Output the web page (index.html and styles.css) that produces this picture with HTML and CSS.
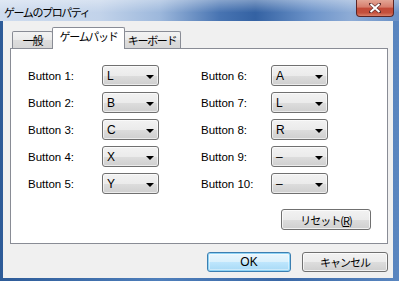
FILE: index.html
```html
<!DOCTYPE html>
<html lang="ja">
<head>
  <meta charset="UTF-8" />
  <title>ゲームのプロパティ</title>
  <link rel="stylesheet" href="styles.css">
</head>
<body>
  <div class="window">
    <!-- Barre de titre -->
    <div class="titlebar">
      <span class="title">ゲームのプロパティ</span>
      <div class="close">
        <svg width="12" height="10" viewBox="0 0 12 10">
          <path d="M1.5 1 L10.5 9 M10.5 1 L1.5 9" stroke="#5a2a2a" stroke-width="3.2" stroke-linecap="square"/>
          <path d="M1.5 1 L10.5 9 M10.5 1 L1.5 9" stroke="#ffffff" stroke-width="2"/>
        </svg>
      </div>
    </div>

    <div class="client">
      <div class="tabs">
        <div class="tab general">一般</div>
        <div class="tab active">ゲームパッド</div>
        <div class="tab keyboard">キーボード</div>
      </div>

      <div class="panel">
        <div class="grid">
          <span class="lbl">Button 1:</span><div class="combo"><span>L</span><i class="arrow"></i></div><span></span>
          <span class="lbl">Button 6:</span><div class="combo"><span>A</span><i class="arrow"></i></div>

          <span class="lbl">Button 2:</span><div class="combo"><span>B</span><i class="arrow"></i></div><span></span>
          <span class="lbl">Button 7:</span><div class="combo"><span>L</span><i class="arrow"></i></div>

          <span class="lbl">Button 3:</span><div class="combo"><span>C</span><i class="arrow"></i></div><span></span>
          <span class="lbl">Button 8:</span><div class="combo"><span>R</span><i class="arrow"></i></div>

          <span class="lbl">Button 4:</span><div class="combo"><span>X</span><i class="arrow"></i></div><span></span>
          <span class="lbl">Button 9:</span><div class="combo"><span>–</span><i class="arrow"></i></div>

          <span class="lbl">Button 5:</span><div class="combo"><span>Y</span><i class="arrow"></i></div><span></span>
          <span class="lbl">Button 10:</span><div class="combo"><span>–</span><i class="arrow"></i></div>
        </div>
        <div class="reset-row">
          <button class="btn reset">リセット(<u>R</u>)</button>
        </div>
      </div>

      <div class="actions">
        <button class="btn ok">OK</button>
        <button class="btn cancel">キャンセル</button>
      </div>
    </div>
  </div>
</body>
</html>
```

FILE: styles.css
```css
body {
  margin: 0;
  padding: 0;
  font-family: 'Liberation Sans', 'Noto Sans CJK JP', sans-serif;
  font-size: 12px;
  color: #000;
  background: #fff;
}

.window {
  width: 399px;
  height: 281px;
  display: flex;
  flex-direction: column;
  background: linear-gradient(to right, #2d5b98 0%, #4f7fbb 40%, #3a68a6 70%, #5a86c0 100%);
  box-sizing: border-box;
  overflow: hidden;
}

.titlebar {
  height: 21px;
  flex: none;
  display: flex;
  justify-content: space-between;
  align-items: flex-start;
  background:
    linear-gradient(to bottom, rgba(255,255,255,0.35) 0%, rgba(255,255,255,0) 60%),
    linear-gradient(to right, #cfdcee 0%, #c2d3ea 25%, #9db8dc 40%, #4874b2 55%, #3462a3 64%, #6c93c9 78%, #8eacd6 88%, #6a90c6 100%);
}

.title {
  font-family: 'Noto Sans CJK JP', sans-serif;
  font-size: 11px;
  letter-spacing: -1.4px;
  line-height: 21px;
  padding-left: 4px;
  padding-top: 2px;
}

.close {
  width: 38px;
  height: 17px;
  margin-right: 5px;
  box-sizing: border-box;
  border: 1px solid #5b2424;
  border-top: none;
  border-radius: 0 0 4px 4px;
  background: linear-gradient(to bottom, #e3a595 0%, #d67d6c 45%, #c24a38 50%, #c4503c 80%, #d9806a 100%);
  display: flex;
  align-items: center;
  justify-content: center;
}

.client {
  flex: 1;
  margin: 0 6px 3px 3px;
  padding: 6px 5px 0 7px;
  background: #f0f0f0;
  display: flex;
  flex-direction: column;
}

/* Onglets */
.tabs {
  display: flex;
  align-items: flex-end;
  height: 22px;
  margin-left: 2px;
  margin-bottom: -1px;
  position: relative;
  z-index: 1;
}

.tab {
  font-family: 'Noto Sans CJK JP', sans-serif;
  font-size: 11px;
  letter-spacing: -1.3px;
  height: 17px;
  margin-bottom: 1px;
  box-sizing: border-box;
  border: 1px solid #898c95;
  border-bottom: none;
  border-radius: 2px 2px 0 0;
  background: linear-gradient(to bottom, #f3f3f3 0%, #ebebeb 50%, #dddddd 51%, #d6d6d6 100%);
  text-align: center;
  line-height: 16px;
}

.tab.general {
  width: 41px;
}

.tab.keyboard {
  width: 57px;
  border-left: none;
}

.tab.active {
  width: 73px;
  height: 22px;
  margin: 0 -1px 0 -1px;
  background: #fff;
  line-height: 17px;
  position: relative;
  z-index: 2;
}

.panel {
  height: 196px;
  box-sizing: border-box;
  border: 1px solid #898c95;
  background: #fff;
  padding: 16px 16px 13px 16px;
}

.grid {
  display: grid;
  grid-template-columns: 75px 57px 41px 71px 57px;
  grid-auto-rows: 21px;
  row-gap: 6px;
  align-items: center;
}

.lbl {
  font-size: 11.5px;
  padding-left: 1px;
}

.combo {
  height: 21px;
  box-sizing: border-box;
  border: 1px solid #707070;
  border-radius: 3px;
  background: linear-gradient(to bottom, #f2f2f2 0%, #ebebeb 50%, #dddddd 51%, #cfcfcf 100%);
  box-shadow: inset 0 0 0 1px rgba(255,255,255,0.6);
  display: flex;
  align-items: center;
  justify-content: space-between;
  padding: 0 4px 0 4px;
  font-size: 12px;
}

.arrow {
  width: 0;
  height: 0;
  border-left: 4px solid transparent;
  border-right: 4px solid transparent;
  border-top: 4px solid #000;
  margin-top: 2px;
}

.reset-row {
  display: flex;
  justify-content: flex-end;
  margin-top: 15px;
}

.btn {
  height: 21px;
  box-sizing: border-box;
  border: 1px solid #707070;
  border-radius: 3px;
  background: linear-gradient(to bottom, #f2f2f2 0%, #ebebeb 50%, #dddddd 51%, #cfcfcf 100%);
  box-shadow: inset 0 0 0 1px rgba(255,255,255,0.7);
  font-family: 'Noto Sans CJK JP', sans-serif;
  font-size: 11px;
  letter-spacing: -1px;
  padding: 0;
  color: #000;
}

.reset {
  width: 90px;
}

.reset u {
  text-decoration: underline;
}

.actions {
  display: flex;
  justify-content: flex-end;
  gap: 11px;
  margin-top: 8px;
}

.actions .btn {
  height: 20px;
}

.ok {
  width: 84px;
  border-color: #3c7fb1;
  background: linear-gradient(to bottom, #eaf6fd 0%, #d9f0fc 50%, #bee6fd 51%, #a7d9f5 100%);
  box-shadow: inset 0 0 0 1px #8fd3f5, inset 0 0 0 2px rgba(255,255,255,0.4);
  font-family: 'Liberation Sans', sans-serif;
  letter-spacing: 0;
  font-size: 12px;
}

.cancel {
  width: 86px;
}
```
